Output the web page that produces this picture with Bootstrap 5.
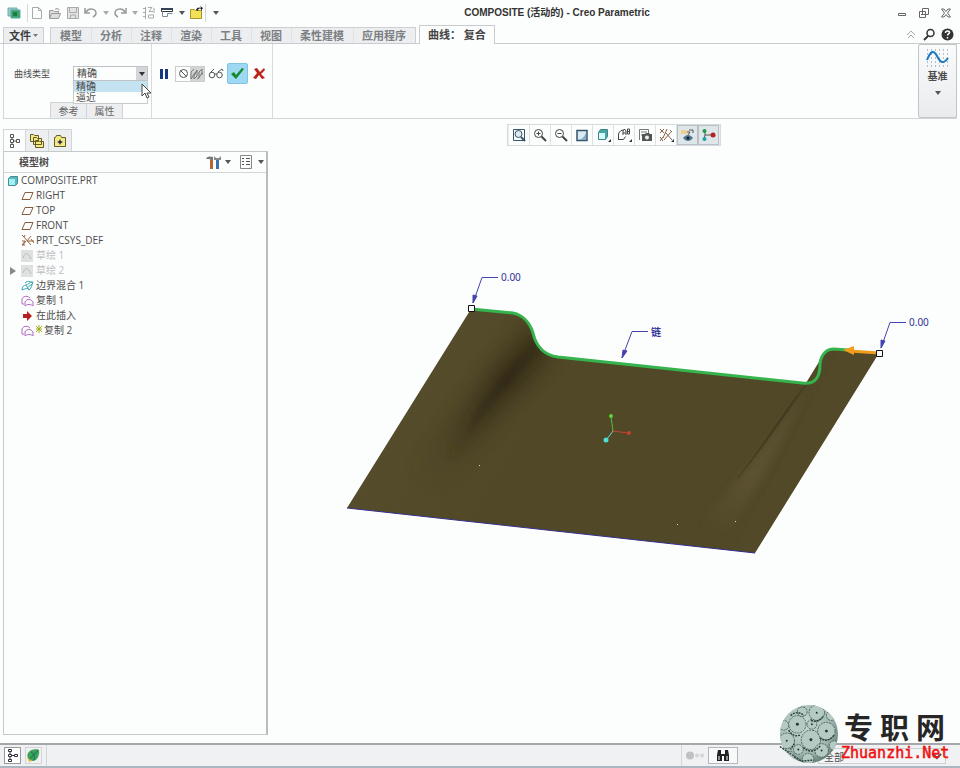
<!DOCTYPE html>
<html lang="zh-CN">
<head>
<meta charset="utf-8">
<meta name="viewport" content="width=device-width, initial-scale=1">
<title>COMPOSITE (活动的) - Creo Parametric</title>
<link href="https://cdn.jsdelivr.net/npm/bootstrap@5.3.0/dist/css/bootstrap.min.css" rel="stylesheet">
<style>
body{font-family:"Open Sans","Noto Sans CJK SC",sans-serif;font-size:10px;line-height:15px;color:#4c4c4c;background:#fcfdfd}
svg{display:block;flex:none}
button,select{font:inherit;color:inherit}
.tool{display:flex;align-items:center;justify-content:center;border:0;background:none;padding:0;width:18px;height:18px}
.drop{width:11px}
.drop::after{content:"";border:3px solid transparent;border-top:4px solid #555;border-bottom:0}
.drop.pale::after{border-top-color:#aaa}
.rule{width:1px;background:#d5d8da;align-self:stretch}
.titlebar{height:25px;padding:0 5px}
.app-title{font:bold 10px/15px "Liberation Sans","Noto Sans CJK SC",sans-serif;color:#333}
.tabstrip{height:19px;padding-left:3px;border-bottom:1px solid #c9cccf}
.tabstrip a{font-size:11px;line-height:15px;font-weight:700;color:#7c8084;background:#eceef0;text-decoration:none;padding:0 9px;height:16px;border-top:1px solid #ccd0d3;white-space:nowrap}
.tabstrip a+a{box-shadow:inset 1px 0 #dfe2e4}
.tabstrip .filetab{display:flex;align-items:center;justify-content:space-between;color:#3c3f42;padding:0 5px;margin-right:6px;width:41px;border:1px solid #ccd0d3;border-bottom:0}
.tabgroup{border:solid #ccd0d3;border-width:0 1px}
.tabstrip .current{color:#444;background:#fcfdfd;height:19px;padding:1px 8px 0;margin:0 0 -1px 3px;border:1px solid #c9cccf;border-bottom:0;box-shadow:none}
.ribbon{margin:0 3px;height:75px;border:1px solid #d3d6d8;border-top:0}
.ribbon-group{border-right:1px solid #d9dcde;padding-top:19px}
.type-group{width:148px}
.control-row{height:21px}
.confirm-row{gap:2px;padding:0 4px 0 3px}
.type-group label{font-size:9px;margin-left:10px}
.picker{position:relative;width:75px;margin-right:3px}
.picker select{appearance:none;width:100%;height:15px;border:1px solid #c0c3c6;border-radius:0;background:#fcfdfd;padding:0 3px;line-height:13px;display:block}
.picker::before{content:"";position:absolute;right:1px;top:1px;width:11px;height:13px;background:#d3d6d8;pointer-events:none}
.picker::after{content:"";position:absolute;right:3px;top:6px;border:3px solid transparent;border-top:4px solid #333;border-bottom:0;pointer-events:none}
.choices{position:absolute;left:0;top:15px;width:100%;border:1px solid #c8cbcd;border-top:0;background:#fcfdfd;z-index:3;line-height:11px}
.choices li{padding:0 2px;height:11px}
.choices .chosen{background:#c3e3f1}
.pointer{position:absolute;left:68px;top:17px;z-index:4}
.subtabs{padding-left:46px}
.subtabs button{width:37px;height:16px;margin-right:-1px;border:1px solid #d0d3d5;border-bottom:0;background:#eceef0;color:#666;padding:0;line-height:14px}
.apply{width:21px;height:21px;background:#9fd8f3;border:1px solid #80c4e4;border-radius:2px}
.pair{border:1px solid #ccc;height:16px}
.pair .tool{width:14px;height:14px}
.pair .on{background:#d2d4d5}
.datum{width:39px;border:1px solid #c3c6c9;border-radius:2px;background:linear-gradient(#fafbfb,#e9ebed);padding:3px 0;margin-right:-1px;font-weight:700}
.side{flex:0 0 265px;margin:10px 0 8px 3px}
.side-tabs button{width:23px;height:22px;border:1px solid #d3d6d8;border-left-width:0;border-bottom:0;background:#eceef0}
.side-tabs .open{background:#fcfdfd;border-left-width:1px}
.side-box{border:1px solid #c6c9cb;border-right:2px solid #b9bcbe}
.side-head{height:21px;border-bottom:1px solid #d3d6d8;padding:0 0 0 15px}
.side-head h2{font-size:10px;line-height:15px;font-weight:700;margin:0}
.tree li{display:flex;align-items:center;gap:2px;height:15px;padding-left:17px}
.tree .root{padding-left:3px}
.tree .off{color:#bcbfc1}
.tree .parent{padding-left:6px}
.tree .twist{width:9px;height:15px}
.viewtools{margin:5px auto 0;border:1px solid #d8dbdd;background:#e9ebed;padding:0 1px;height:22px}
.viewtools button{width:21px;height:20px;background:#fcfdfd;border:0;border-right:1px solid #dfe2e4}
.viewtools .on{background:#dfe6ea;border:1px solid #b8c0c5}
.stage{min-width:0}
.main-area,.canvas{min-height:0}
.stage text{font-family:"Noto Sans","Noto Sans CJK SC",sans-serif;font-size:10px;fill:#33339a}
.statusbar{height:25px;border-top:2px solid #a5a7aa;border-bottom:2px solid #aab7c2;background:#eff1f2;padding:0 14px 0 4px}
.statusbar .tool{width:17px;height:17px;border:1px solid #d3d5d6}
.statusbar .on{background:#fff;border-color:#999}
.statusbar .find{width:30px;border-color:#b4b7b9;background:#f8f9fa}
.statusbar select{width:128px;height:16px;border:1px solid #cdd0d2;background:#f2f4f5;padding:0 0 0 1px;margin-left:80px}
.watermark{position:absolute;right:8px;bottom:4px;z-index:5;pointer-events:none;gap:1px}
.brand{font:bold 29px/32px "Noto Sans CJK SC",sans-serif;color:#262626;padding:0 7px 0 4px;display:flex;justify-content:space-between;width:112px}
.site{font:15px/22px "DejaVu Sans Mono",monospace;color:#f01010;-webkit-text-stroke:.5px #f01010;margin-left:1px}
</style>
<script src="https://cdn.jsdelivr.net/npm/bootstrap@5.3.0/dist/js/bootstrap.bundle.min.js"></script>
</head>
<body>
<div class="d-flex flex-column vh-100 position-relative overflow-hidden">

<header class="titlebar d-flex align-items-center">
  <div class="d-flex align-items-center">
    <span class="tool"><svg width="14" height="14"><path d="M1 2h9v8H1z" fill="#9bc8c4" stroke="#7aa"/><path d="M4 4h9v8H4z" fill="#3ca65a" stroke="#58a8c0"/><path d="M6 6h4v4H6z" fill="#1d7c45"/></svg></span>
    <span class="rule mx-1 me-0"></span>
    <button class="tool" aria-label="新建"><svg width="14" height="14" fill="none" stroke="#aaa"><path d="M2.500 1.500h6l3 3v8h-9zM8.500 1.500v3h3"/></svg></button>
    <button class="tool" aria-label="打开"><svg width="14" height="14" fill="#ddd" stroke="#999"><path d="M1.500 12.500v-8h4l1 1h4v2M1.500 12.500l2-5h9l-2 5zM7 3.500c2-2 4-1 4 1" /></svg></button>
    <button class="tool" aria-label="保存"><svg width="14" height="14" fill="#e4e4e4" stroke="#aaa"><path d="M1.500 1.500h11v11h-11zM3.500 1.500h7v5h-7zM4.500 9h5v3.500h-5z"/></svg></button>
    <button class="tool" aria-label="撤消"><svg width="14" height="12" fill="none" stroke="#999" stroke-width="1.500"><path d="M2 5c3-5 10-3 10 1 0 2-1 3-3 4M1 1v5h5"/></svg></button>
    <button class="tool drop pale" aria-label="撤消列表"></button>
    <button class="tool" aria-label="重做"><svg width="14" height="12" fill="none" stroke="#999" stroke-width="1.500"><path d="M12 5C9 0 2 2 2 6c0 2 1 3 3 4M13 1v5H8"/></svg></button>
    <button class="tool drop pale" aria-label="重做列表"></button>
    <button class="tool" aria-label="重新生成"><svg width="14" height="14" fill="none" stroke="#aaa"><path d="M1 2.500h3M1 6.500h3M1 10.500h3M3.500 1v12M6 1.500h4l-3 4h4M6.500 9h5v3h-5zM12 2v5"/></svg></button>
    <button class="tool" aria-label="窗口"><svg width="14" height="14"><path d="M1.500 2.500h11v3h-11z" fill="#fff" stroke="#333"/><path d="M1 2h12v2H1z" fill="#345"/><path d="M2.500 5.500v5h5v-3h5" fill="none" stroke="#7b8c9d"/></svg></button>
    <button class="tool drop" aria-label="窗口列表"></button>
    <button class="tool" aria-label="关闭窗口"><svg width="14" height="14"><path d="M1.500 12.500v-9h4l1 1h6v8z" fill="#f2e158" stroke="#a79426"/><path d="M7 4c1-3 3-3 5-2l-1-2 3 2-2 3v-2c-2-1-3 0-3 2" fill="#222"/></svg></button>
    <span class="rule"></span>
    <button class="tool drop ms-1" aria-label="自定义"></button>
  </div>
  <h1 class="app-title m-0 mx-auto">COMPOSITE (活动的) - Creo Parametric</h1>
  <div class="d-flex">
    <button class="tool me-1" aria-label="最小化"><svg width="10" height="10"><path d="M1.500 5.500h7v2h-7z" fill="#fff" stroke="#666"/></svg></button>
    <button class="tool" aria-label="还原"><svg width="12" height="12" fill="#fff" stroke="#666"><path d="M4.500 1.500h6v6h-6zM1.500 4.500h6v6h-6zM3 7.500h3"/></svg></button>
    <button class="tool ms-1" aria-label="关闭"><svg width="12" height="12"><path d="M1.500 2h2.500l2 2.500L8 2h2.500L7.500 6l3 4H8L6 7.500 4 10H1.500l3-4z" fill="#fff" stroke="#666"/></svg></button>
  </div>
</header>

<nav class="tabstrip d-flex align-items-end">
  <a href="#" class="filetab">文件<svg width="5" height="4"><path d="M0 0h5L2.500 3z" fill="#777"/></svg></a>
  <div class="tabgroup d-flex">
    <a href="#">模型</a><a href="#">分析</a><a href="#">注释</a><a href="#">渲染</a><a href="#">工具</a><a href="#">视图</a><a href="#">柔性建模</a><a href="#">应用程序</a>
  </div>
  <a href="#" class="current">曲线： 复合</a>
  <div class="d-flex ms-auto pe-1">
    <button class="tool" aria-label="最小化功能区"><svg width="10" height="9" fill="none" stroke="#aaa"><path d="M1 5l4-4 4 4M2 8l3-3 3 3"/></svg></button>
    <button class="tool" aria-label="搜索"><svg width="13" height="13" fill="none" stroke="#333"><circle cx="7.500" cy="5" r="3.500" stroke-width="1.500"/><path d="M5 8l-4 4" stroke-width="2"/></svg></button>
    <button class="tool" aria-label="帮助"><svg width="13" height="13"><circle cx="6.500" cy="6.500" r="6" fill="#333"/><path d="M4.500 5c0-3 4-2.500 4-.5 0 1.500-2 1.200-2 3M6.500 9v1.500" fill="none" stroke="#fff" stroke-width="1.500"/></svg></button>
  </div>
</nav>

<section class="ribbon d-flex">
  <div class="ribbon-group type-group d-flex flex-column">
    <div class="control-row d-flex align-items-center justify-content-between">
      <label for="curveType">曲线类型</label>
      <div class="picker">
        <select id="curveType"><option>精确</option><option>逼近</option></select>
        <ul class="choices list-unstyled m-0"><li class="chosen">精确</li><li>逼近</li></ul>
        <svg class="pointer" width="12" height="16"><path d="M1 1v12l3-3 2 5 2-1-2-4h4z" fill="#fff" stroke="#444"/></svg>
      </div>
    </div>
    <div class="subtabs mt-auto d-flex"><button>参考</button><button>属性</button></div>
  </div>
  <div class="ribbon-group">
    <div class="control-row confirm-row d-flex align-items-center">
      <button class="tool" aria-label="暂停"><svg width="10" height="12" fill="#17377e"><path d="M1 1h3v10H1zM6 1h3v10H6z"/></svg></button>
      <div class="pair d-flex">
        <button class="tool" aria-label="无预览"><svg width="11" height="11" fill="none" stroke="#555"><circle cx="5.500" cy="5.500" r="4"/><path d="M2.500 2.500l6 6"/></svg></button>
        <button class="tool on" aria-label="分离预览"><svg width="14" height="14" fill="none" stroke="#777"><path d="M1 12V5l3-3M4 9l3-6v6l-3 3zM9 11V5l3-3v6M1 12c2-1 2-6 5-7M7 12c4-1 2-5 6-6"/></svg></button>
      </div>
      <button class="tool" aria-label="预览"><svg width="17" height="11" fill="none" stroke="#555"><circle cx="4" cy="7" r="2.800"/><circle cx="11.500" cy="7" r="2.800"/><path d="M2 5l4-4M10 4l4-3 1 2M7 6h2"/></svg></button>
      <button class="tool apply" aria-label="确定"><svg width="15" height="13"><path d="M1 7l3-2 2 3 6-7 2 1-8 10z" fill="#128a2e"/></svg></button>
      <button class="tool" aria-label="取消"><svg width="13" height="13"><path d="M1 2l3-1 3 4 4-4 1 2-4 4 4 4-3 1-3-4-3 4-3-1 4-5z" fill="#bb2218"/></svg></button>
    </div>
  </div>
  <button class="datum ms-auto d-flex flex-column align-items-center justify-content-start">
    <svg width="24" height="21"><path d="M1 2h22M1 6h22M1 10h22M1 14h22M1 18h22" stroke="#6d87a5" stroke-dasharray="1 3"/><path d="M1 12C5 2 8 2 11 8s6 9 11 2" fill="none" stroke="#1c78bf" stroke-width="2"/></svg>
    <span>基准</span>
    <span class="tool drop" aria-hidden="true"></span>
  </button>
</section>

<main class="main-area d-flex flex-fill">
  <aside class="side d-flex flex-column">
    <div class="side-tabs d-flex">
      <button class="tool open" aria-label="模型树选项卡"><svg width="12" height="16" fill="none" stroke="#555"><path d="M1.500 1.500h3v3h-3zM1.500 6.500h3v3h-3zM1.500 11.500h3v3h-3zM7.500 6.500h3v3h-3zM3 5v1M3 10v1M5 8h2"/></svg></button>
      <button class="tool" aria-label="文件夹浏览器"><svg width="16" height="16" fill="#f3ea83" stroke="#655b28"><path d="M1.500 1.500h3l1 1h4v6h-8zM4.500 4.500h3l1 1h4v6h-8zM6.500 7.500h3l1 1h4v6h-8z"/></svg></button>
      <button class="tool" aria-label="收藏夹"><svg width="14" height="14"><path d="M1.500 12.500v-9h1l1-2h4l1 2h4v9z" fill="#f3ea83" stroke="#655b28"/><path d="M7 5.500v5M4.500 8h5" stroke="#224"/><circle cx="7" cy="8" r="1.500" fill="#224"/></svg></button>
    </div>
    <div class="side-box flex-fill">
      <div class="side-head d-flex align-items-center">
        <h2>模型树</h2>
        <div class="d-flex ms-auto">
          <button class="tool" aria-label="设置"><svg width="16" height="15"><path d="M1 4c1-3 4-3 7-2v3H6L4 4z" fill="#777"/><path d="M5 5h3v9H5z" fill="#b66436"/><path d="M11 5h3v9h-3z" fill="#3e70b0"/><path d="M9 1v4h7V1l-2 2h-3z" fill="#888"/></svg></button>
          <button class="tool drop me-1" aria-label="设置列表"></button>
          <button class="tool" aria-label="显示"><svg width="13" height="14" fill="none" stroke="#888"><path d="M.5.500h11v13H.5z"/><path d="M2 3.500h2M6 3.500h4M2 6.500h2M6 6.500h4M2 9.500h2M6 9.500h4" stroke="#555"/></svg></button>
          <button class="tool drop" aria-label="显示列表"></button>
        </div>
      </div>
      <ul class="tree list-unstyled m-0">
        <li class="root"><svg width="12" height="12"><path d="M1.500 3.500l2-2h7v7l-2 2h-7z" fill="#57b9bd" stroke="#438e94"/><path d="M2 4h6v6H2z" fill="#a2f0ef"/></svg><span>COMPOSITE.PRT</span></li>
        <li><svg width="13" height="10" fill="none" stroke="#8a5a3c"><path d="M4 1.500h8l-3 7H1z"/></svg><span>RIGHT</span></li>
        <li><svg width="13" height="10" fill="none" stroke="#8a5a3c"><path d="M4 1.500h8l-3 7H1z"/></svg><span>TOP</span></li>
        <li><svg width="13" height="10" fill="none" stroke="#8a5a3c"><path d="M4 1.500h8l-3 7H1z"/></svg><span>FRONT</span></li>
        <li><svg width="13" height="13" fill="none" stroke="#9a6440"><path d="M2 2l8 9M5 7L2 11M6 7l4-5M6 7h7M1 1l2 2 1-2M1 7h3l-3 4h3M10 5l3 4"/></svg><span>PRT_CSYS_DEF</span></li>
        <li class="off"><svg width="13" height="12"><path d="M0 0h12v12H0z" fill="#dfe0e1"/><path d="M2 8c2-6 5-6 8 1" fill="none" stroke="#b9bbbc"/></svg><span>草绘 1</span></li>
        <li class="off parent"><svg class="twist" viewBox="0 0 9 15"><path d="M0 4l6 4-6 4z" fill="#888"/></svg><svg width="13" height="12"><path d="M0 0h12v12H0z" fill="#dfe0e1"/><path d="M2 8c2-6 5-6 8 1" fill="none" stroke="#b9bbbc"/></svg><span>草绘 2</span></li>
        <li><svg width="13" height="12" fill="none" stroke="#3aa5ac"><path d="M1 10c0-3 2-5 4-5s3-3 7-3c-1 3-2 7-4 8-1-3-4-1-7 0zM4 3c3-3 4-1 7-1M5 5l3 5M6 8l5-4"/></svg><span>边界混合 1</span></li>
        <li><svg width="13" height="12" fill="none" stroke="#b26bc0"><path d="M1 9V4c2-4 6-3 8-1M1 9l2 0M4 11V7c2-4 6-3 8 0v4c-2-2-6-2-8 0z"/></svg><span>复制 1</span></li>
        <li><svg width="13" height="12"><path d="M2 4h4V1l5 5-5 5V8H2z" fill="#b51f1f"/></svg><span>在此插入</span></li>
        <li><svg width="13" height="12" fill="none" stroke="#b26bc0"><path d="M1 9V4c2-4 6-3 8-1M1 9l2 0M4 11V7c2-4 6-3 8 0v4c-2-2-6-2-8 0z"/></svg><svg width="6" height="12" stroke="#a4a81c"><path d="M0 1l6 6M6 1L0 7M3 0v8M0 4h6"/></svg><span>复制 2</span></li>
      </ul>
    </div>
  </aside>

  <section class="stage flex-fill d-flex flex-column">
    <div class="viewtools d-flex">
      <button class="tool" aria-label="重新调整"><svg width="14" height="14" fill="none" stroke="#38536c"><path d="M1.500 1.500h11v11h-11z"/><circle cx="6.500" cy="6" r="3.500" fill="#dceaf2"/><path d="M9 9l4 4" stroke-width="2"/></svg></button>
      <button class="tool" aria-label="放大"><svg width="14" height="14" fill="none" stroke="#444"><circle cx="5.500" cy="5.500" r="4"/><path d="M3.500 5.500h4M5.500 3.500v4"/><path d="M8.500 8.500L13 13" stroke-width="2"/></svg></button>
      <button class="tool" aria-label="缩小"><svg width="14" height="14" fill="none" stroke="#444"><circle cx="5.500" cy="5.500" r="4"/><path d="M3.500 5.500h4"/><path d="M8.500 8.500L13 13" stroke-width="2"/></svg></button>
      <button class="tool" aria-label="重画"><svg width="12" height="13"><path d="M1 1.500h10v10H1z" fill="#d8eaf4" stroke="#38536c" stroke-width="1.500"/><path d="M3 11c3-1 5-3 7-7v7z" fill="#86acc6"/></svg></button>
      <button class="tool" aria-label="显示样式"><svg width="15" height="14"><path d="M2.500 4.500l2-3h7v7l-2 3h-7z" fill="#4aa3a5" stroke="#38888c"/><path d="M3 5h6v6H3z" fill="#d7fbfa"/><path d="M15 11v3h-3z" fill="#333"/></svg></button>
      <button class="tool" aria-label="已命名视图"><svg width="15" height="14" fill="none" stroke="#444"><path d="M1.500 12V6c1-3 3-4 5-4M1.500 11.500h5l2-3M6 7V3l1.500-2L9 3v4M6 5h3M10.500 1h2v5h-2zM10.500 3.500h2"/><path d="M15 11v3h-3z" fill="#333" stroke="none"/></svg></button>
      <button class="tool" aria-label="视图管理器"><svg width="14" height="14"><path d="M1.500 12V1.500h9V5M3 4h6M3 7h2" fill="none" stroke="#777"/><path d="M4 6h3l1-1h3l1 1h2v7H4z" fill="#555"/><circle cx="9" cy="9.500" r="2" fill="#eee"/></svg></button>
      <button class="tool" aria-label="基准显示"><svg width="15" height="14" fill="none" stroke="#8a6046"><path d="M1 1l4 4M5 1L1 5M8 1L4 10M7 5l6 7M5 12l7-8M1 9l3 4M4 9l-3 4M11 2l2 2"/><path d="M15 11v3h-3z" fill="#333" stroke="none"/></svg></button>
      <button class="tool on" aria-label="注释显示"><svg width="15" height="14"><path d="M1 2h6v4H1z" fill="#f1cf8e"/><path d="M9 2h4v3M7 4h3l-2 3" fill="none" stroke="#555"/><path d="M3 10c3-4 7-4 10 0-3 4-7 4-10 0z" fill="#52798f"/><circle cx="8" cy="10" r="1.500" fill="#123"/></svg></button>
      <button class="tool on" aria-label="旋转中心"><svg width="15" height="14"><path d="M4 3v4h7M4 7l-1 4" fill="none" stroke="#555"/><circle cx="3.500" cy="3" r="2" fill="#229848"/><circle cx="12" cy="7" r="2.500" fill="#b52222"/><circle cx="3.500" cy="11" r="2" fill="#20a3a0"/></svg></button>
    </div>
    <svg class="canvas w-100 flex-fill" viewBox="268 146 692 597" role="img" aria-label="曲面模型">
      <defs>
        <path id="sheet" d="M471 309L513 313C523 315 530 323 533 333C536 346 543 355 558 357L806 383L822 357Q827 349 836 349L879 353L755 553L347 508Z"/>
        <clipPath id="sheetClip"><use href="#sheet"/></clipPath>
        <linearGradient id="dark" gradientUnits="userSpaceOnUse" x1="538" y1="335" x2="435" y2="490"><stop stop-color="#3a3119"/><stop offset=".3" stop-color="#302815"/><stop offset=".6" stop-color="#383019" stop-opacity=".8"/><stop offset="1" stop-color="#413a20" stop-opacity="0"/></linearGradient>
        <linearGradient id="streak" gradientUnits="userSpaceOnUse" x1="810" y1="385" x2="715" y2="535"><stop stop-color="#615737" stop-opacity=".4"/><stop offset=".6" stop-color="#615737" stop-opacity=".7"/><stop offset="1" stop-color="#615737" stop-opacity="0"/></linearGradient>
        <linearGradient id="base" gradientUnits="userSpaceOnUse" x1="400" y1="400" x2="520" y2="470"><stop stop-color="#554c2b"/><stop offset="1" stop-color="#504827"/></linearGradient>
        <filter id="soft8" x="-50%" y="-50%" width="200%" height="200%"><feGaussianBlur stdDeviation="8"/></filter>
        <filter id="soft3" x="-50%" y="-50%" width="200%" height="200%"><feGaussianBlur stdDeviation="4"/></filter>
      </defs>
      <use href="#sheet" fill="url(#base)"/>
      <g clip-path="url(#sheetClip)">
        <path d="M526 320L556 358L500 420L440 490L405 480L475 385Z" fill="url(#dark)" opacity=".5" filter="url(#soft8)"/>
        <path d="M534 335L543 350L510 385L450 460L480 402Z" fill="url(#dark)" filter="url(#soft3)"/>
        <path d="M808 388L772 460L730 530L695 530L742 475Z" fill="url(#streak)" filter="url(#soft3)"/>
        <path d="M806 385C790 402 770 435 738 478C764 446 786 414 806 385Z" fill="#413a20" stroke="#474024"/>
        <path d="M879 353L755 553L735 550L840 349Z" fill="#554c2b" opacity=".4"/>
      </g>
      <path d="M347 508L755 553" stroke="#34308a"/>
      <path d="M471 309L513 313C523 315 530 323 533 333C536 346 543 355 558 357L802 383C817 385 820 375 820 364C821 354 827 349 834 349L848 350" fill="none" stroke="#35b34c" stroke-width="3"/>
      <path d="M879 353L850 351" stroke="#f09c1c" stroke-width="3"/><path d="M843 350l11-4v9z" fill="#f09c1c"/>
      <g fill="#fff" stroke="#111"><path d="M468.500 305.500h6v6h-6zM876.500 350.500h6v6h-6z"/></g>
      <g fill="none" stroke="#4444ad">
        <path d="M498 277.500h-16L473 303M648 331.500h-16L622 358M906 322.500h-16L881 348"/>
        <path d="M473 303v-8l4 1zM622 358l1-8 4 1zM881 348v-8l4 1z" fill="#4444ad"/>
      </g>
      <text x="501" y="281">0.00</text><text x="651" y="336" font-weight="700">链</text><text x="909" y="326">0.00</text>
      <g fill="none"><path d="M613 431l-2-14" stroke="#57bb3c"/><path d="M613 431l15 2" stroke="#c6432e"/><path d="M613 431l-6 8" stroke="#6dd7c9"/></g>
      <circle cx="611" cy="416" r="2" fill="#5bd335"/><circle cx="629" cy="433" r="2" fill="#c6432e"/><circle cx="606" cy="440" r="2.500" fill="#4ee0d6"/>
      <path d="M479 465h1v1h-1zM677 524h1v1h-1zM735 521h1v1h-1z" fill="#dcd8b8"/>
    </svg>
  </section>
</main>

<footer class="statusbar d-flex align-items-center">
  <button class="tool on" aria-label="导航器"><svg width="12" height="13" fill="none" stroke="#334"><path d="M1.500.500h3v2h-3zM1.500 5.500h3v2h-3zM1.500 10.500h3v2h-3zM7.500 5.500h3v2h-3zM3 3v2M3 8v2M5 6.500h2"/></svg></button>
  <button class="tool ms-1" aria-label="浏览器"><svg width="15" height="15"><path d="M2 5C5 0 12 1 13 2c1 5-2 11-6 11S0 9 2 5z" fill="#3ba35b"/><path d="M2 12C5 10 9 6 12 2M5 4c3 1 4 5 3 8" fill="none" stroke="#1d6d58"/><path d="M1 9l2 5 3-1z" fill="#e6bb3c"/></svg></button>
  <span class="rule ms-1"></span>
  <span class="rule ms-auto me-1"></span>
  <svg width="18" height="9" fill="#d3d5d6"><circle cx="4" cy="4.500" r="4" fill="#bfc1c3"/><circle cx="11" cy="4.500" r="2"/><circle cx="16" cy="4.500" r="2"/></svg>
  <button class="tool find ms-1" aria-label="查找"><svg width="14" height="13" fill="#222"><path d="M2 1h3v4h4V1h3l1 5v6H8V7H6v5H1V6z"/><path d="M3 7v4M11 7v4" stroke="#fff"/></svg></button>
  <select aria-label="选择过滤器"><option>全部</option></select>
</footer>

<div class="watermark d-flex align-items-end">
  <svg width="60" height="60" viewBox="0 0 62 62">
    <defs><radialGradient id="ballShade" cx=".4" cy=".35" r=".7"><stop stop-color="#cbdcd6"/><stop offset=".7" stop-color="#9fb7b0"/><stop offset="1" stop-color="#5f7972"/></radialGradient><clipPath id="ballClip"><circle cx="31" cy="31" r="30"/></clipPath></defs>
    <circle cx="31" cy="31" r="30" fill="url(#ballShade)"/>
    <g clip-path="url(#ballClip)" fill="#b4cac3" stroke="#4a615b" stroke-dasharray="2 1">
      <circle cx="19" cy="21" r="9"/><circle cx="39" cy="9" r="8"/><circle cx="33" cy="37" r="10"/><circle cx="49" cy="28" r="9"/><circle cx="8" cy="38" r="8"/><circle cx="34" cy="21" r="5"/><circle cx="24" cy="8" r="5"/><circle cx="20" cy="47" r="5"/><circle cx="44" cy="48" r="7"/><circle cx="30" cy="57" r="6"/><circle cx="5" cy="22" r="5"/><circle cx="54" cy="12" r="5"/><circle cx="57" cy="43" r="5"/><circle cx="11" cy="54" r="5"/>
    </g>
    <g fill="none" stroke="#2c3f3a" stroke-width="1.500" stroke-dasharray="2 1"><path d="M12 12q7-6 14 0M33 17q8 3 13-5M10 27q5 8 12 5M25 45q9 8 18-2M42 35q8 6 15-3M1 44l22 15 12-1M16 41l-4 6"/></g>
    <g fill="#23332f"><circle cx="19" cy="21" r="1.500"/><circle cx="39" cy="9" r="1"/><circle cx="33" cy="37" r="1.500"/><circle cx="49" cy="28" r="1.500"/><circle cx="8" cy="38" r="1"/><circle cx="34" cy="21" r="1"/><circle cx="20" cy="47" r="1"/><circle cx="44" cy="48" r="1"/></g>
  </svg>
  <div><div class="brand"><span>专</span><span>职</span><span>网</span></div><div class="site">Zhuanzhi.Net</div></div>
</div>
</div>
</body>
</html>
